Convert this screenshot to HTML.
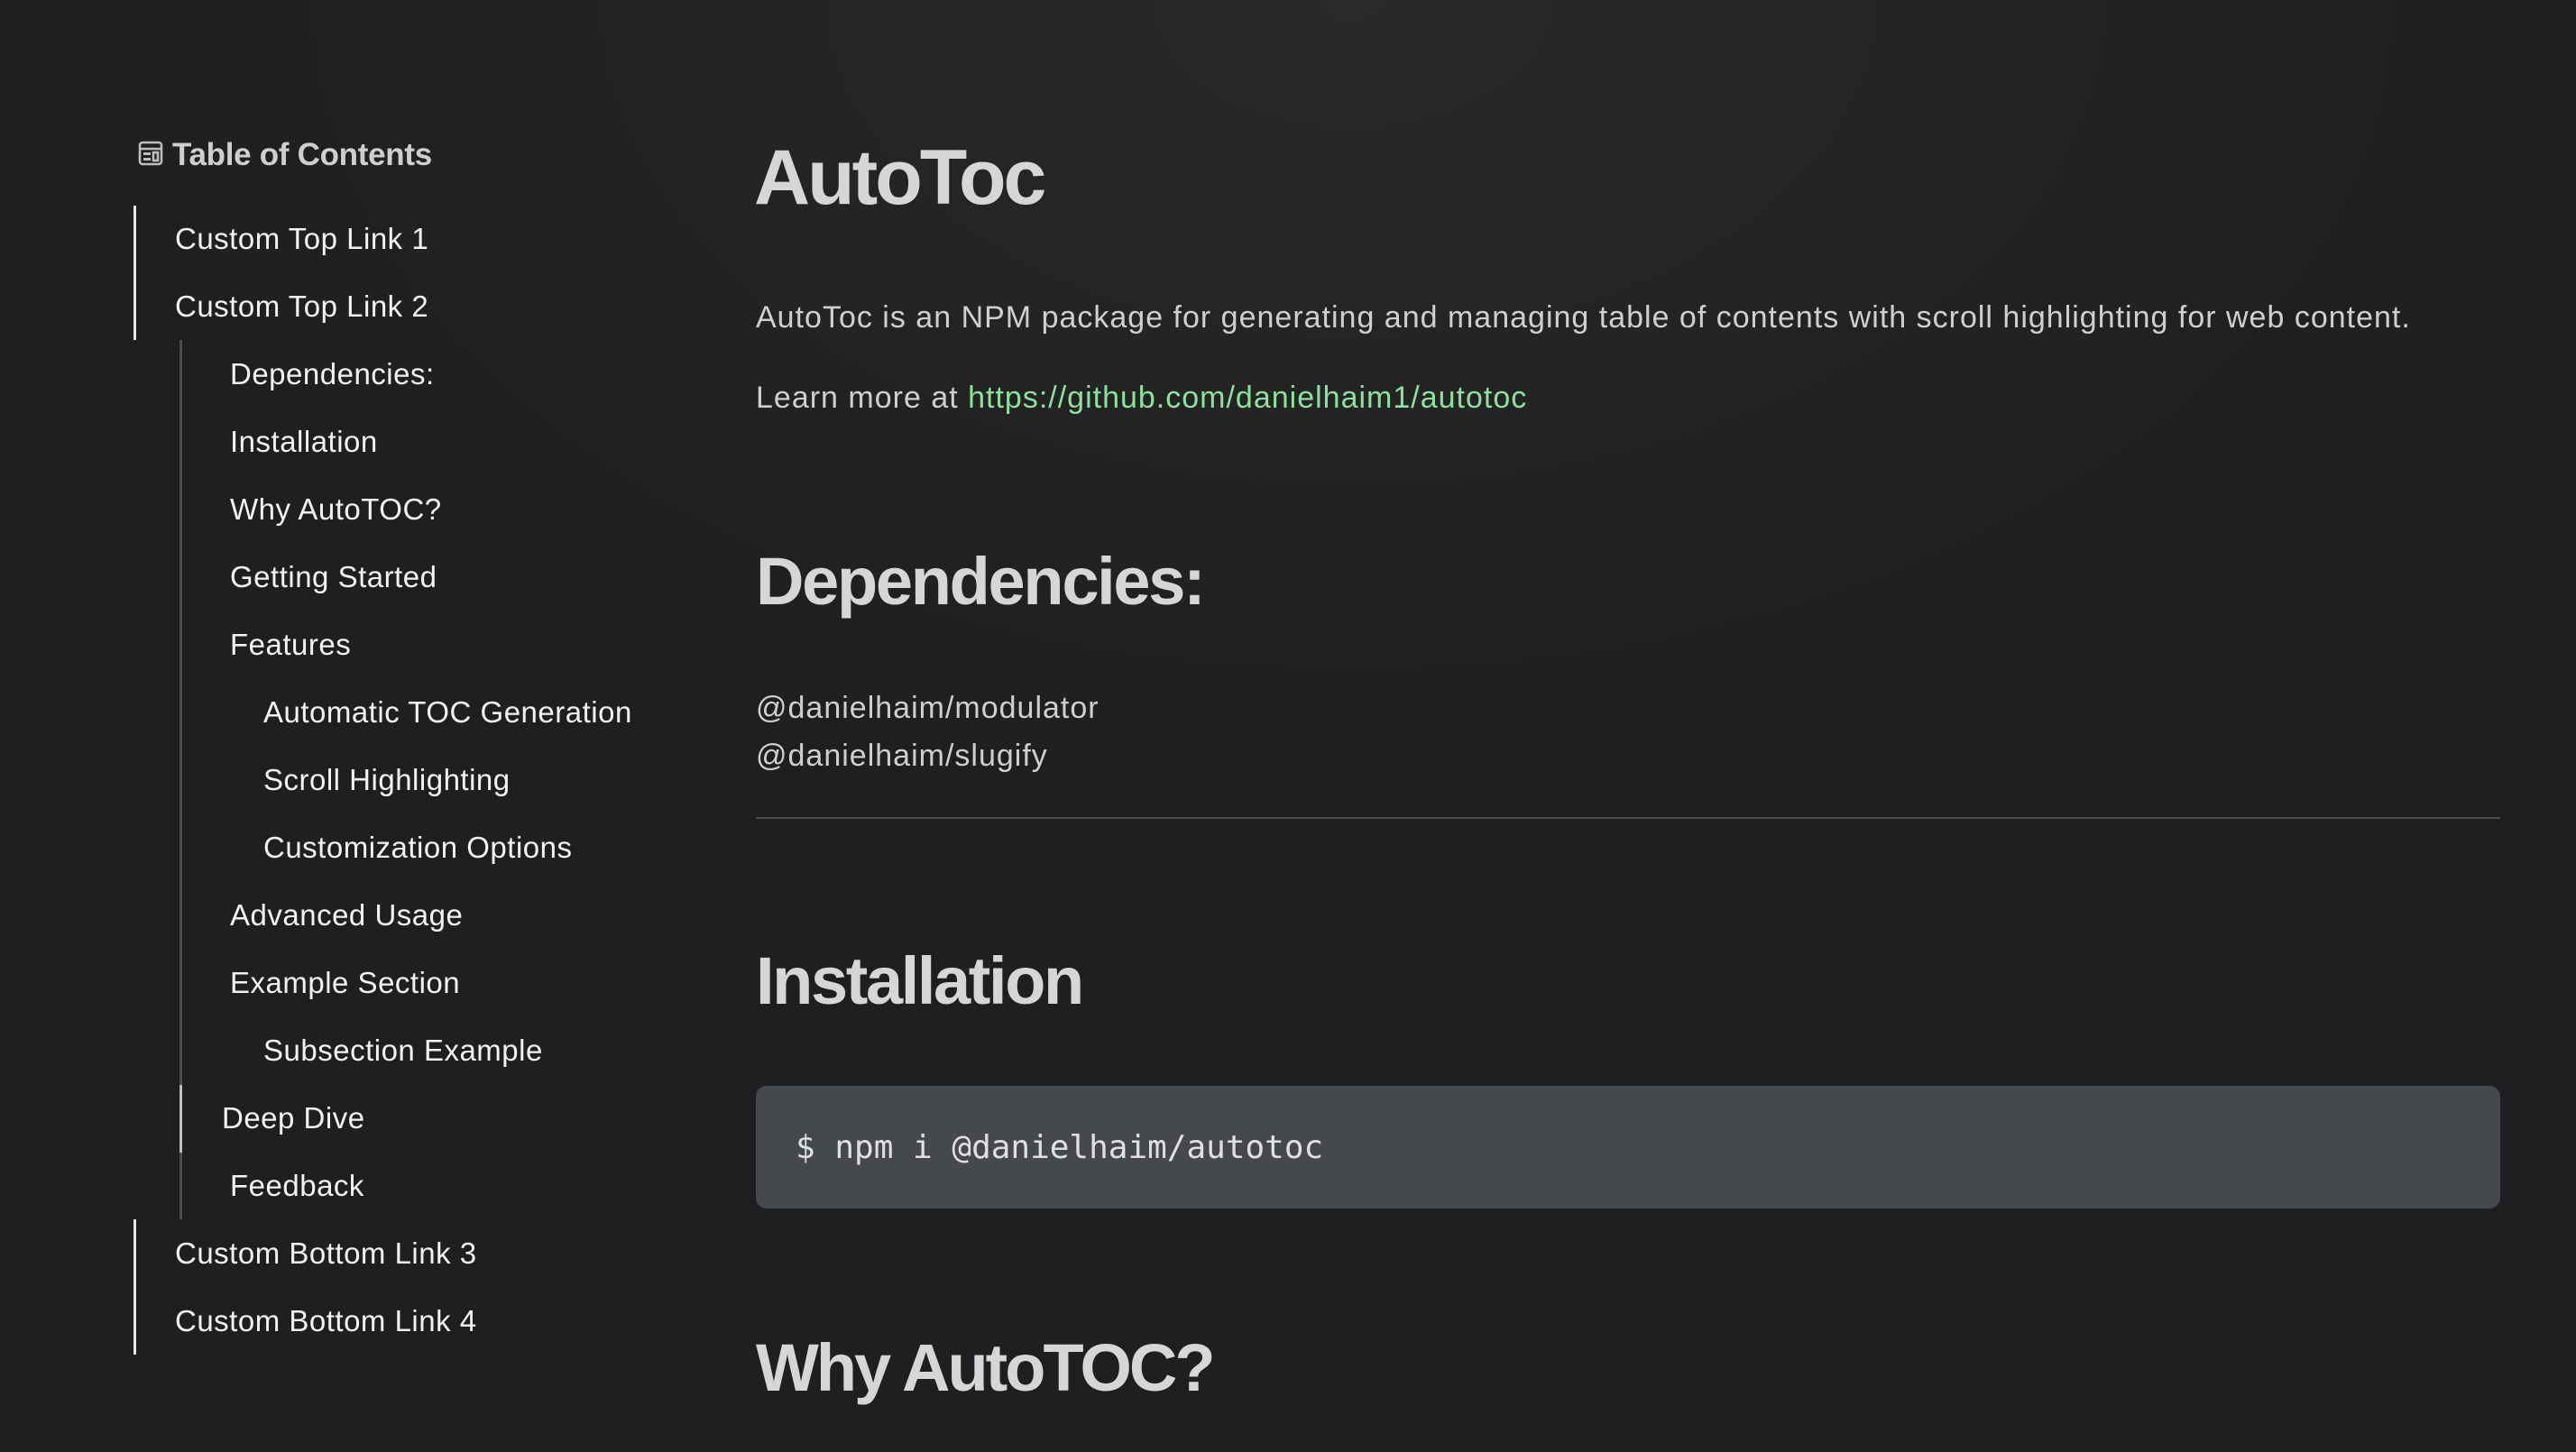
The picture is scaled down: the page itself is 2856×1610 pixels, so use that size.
<!DOCTYPE html>
<html><head><meta charset="utf-8"><style>
html,body{margin:0;padding:0}
body{width:2856px;height:1610px;overflow:hidden;position:relative;font-family:"Liberation Sans",sans-serif;
background:radial-gradient(ellipse 1400px 900px at 1500px 0px,#2b2929 0%,#242425 45%,#1e1f21 100%);color:#d6d6d8}
.a{position:absolute;white-space:nowrap}
.toc{font-size:33px;color:#f2f2f2;line-height:40px;letter-spacing:0.5px}
.h{font-weight:bold;color:#d5d6d8}
.p{font-size:34px;color:#cfcfd1;letter-spacing:1.0px;line-height:40px}
.line{position:absolute;width:3px}
</style></head><body>
<svg class="a" style="left:153px;top:156px" width="28" height="28" viewBox="0 0 28 28" fill="none" stroke="#bdbdbd" stroke-width="2.6">
<rect x="2" y="2" width="24" height="24" rx="3"/><line x1="2" y1="9" x2="26" y2="9"/>
<rect x="6" y="13" width="8" height="3" fill="#bdbdbd" stroke="none"/><rect x="6" y="19" width="8" height="3" fill="#bdbdbd" stroke="none"/>
<rect x="17" y="13" width="5" height="9" fill="none"/></svg>
<div class="a" style="left:191px;top:152px;font-size:35px;font-weight:bold;color:#cfcfcf;letter-spacing:-0.3px">Table of Contents</div>

<div class="line" style="left:148px;top:228px;height:149px;background:#e8e8e8"></div>
<div class="line" style="left:199px;top:377px;height:975px;background:#4a4b4d"></div>
<div class="line" style="left:199px;top:1203px;height:75px;background:#bfbfbf"></div>
<div class="line" style="left:148px;top:1352px;height:150px;background:#e8e8e8"></div>

<div class="a toc" style="left:194px;top:245px">Custom Top Link 1</div>
<div class="a toc" style="left:194px;top:320px">Custom Top Link 2</div>
<div class="a toc" style="left:255px;top:395px">Dependencies:</div>
<div class="a toc" style="left:255px;top:470px">Installation</div>
<div class="a toc" style="left:255px;top:545px">Why AutoTOC?</div>
<div class="a toc" style="left:255px;top:620px">Getting Started</div>
<div class="a toc" style="left:255px;top:695px">Features</div>
<div class="a toc" style="left:292px;top:770px">Automatic TOC Generation</div>
<div class="a toc" style="left:292px;top:845px">Scroll Highlighting</div>
<div class="a toc" style="left:292px;top:920px">Customization Options</div>
<div class="a toc" style="left:255px;top:995px">Advanced Usage</div>
<div class="a toc" style="left:255px;top:1070px">Example Section</div>
<div class="a toc" style="left:292px;top:1145px">Subsection Example</div>
<div class="a toc" style="left:246px;top:1220px">Deep Dive</div>
<div class="a toc" style="left:255px;top:1295px">Feedback</div>
<div class="a toc" style="left:194px;top:1370px">Custom Bottom Link 3</div>
<div class="a toc" style="left:194px;top:1445px">Custom Bottom Link 4</div>

<div class="a h" style="left:836px;top:148px;font-size:86px;letter-spacing:-3px">AutoToc</div>
<div class="a p" style="left:838px;top:332px">AutoToc is an NPM package for generating and managing table of contents with scroll highlighting for web content.</div>
<div class="a p" style="left:838px;top:421px">Learn more at <span style="color:#8fe09c">https://github.com/danielhaim1/autotoc</span></div>

<div class="a h" style="left:838px;top:602px;font-size:74px;letter-spacing:-2.3px">Dependencies:</div>
<div class="a p" style="left:838px;top:765px">@danielhaim/modulator</div>
<div class="a p" style="left:838px;top:818px">@danielhaim/slugify</div>
<div class="a" style="left:838px;top:906px;width:1934px;height:2px;background:#4d4e50"></div>

<div class="a h" style="left:838px;top:1045px;font-size:74px;letter-spacing:-2.4px">Installation</div>
<div class="a" style="left:838px;top:1204px;width:1934px;height:136px;background:#45484d;border-radius:12px"></div>
<div class="a" style="left:882px;top:1252px;font-family:'DejaVu Sans Mono','Liberation Mono',monospace;font-size:36px;color:#e0e0e0;letter-spacing:0px">$ npm i @danielhaim/autotoc</div>

<div class="a h" style="left:838px;top:1474px;font-size:74px;letter-spacing:-3px">Why AutoTOC?</div>
</body></html>
